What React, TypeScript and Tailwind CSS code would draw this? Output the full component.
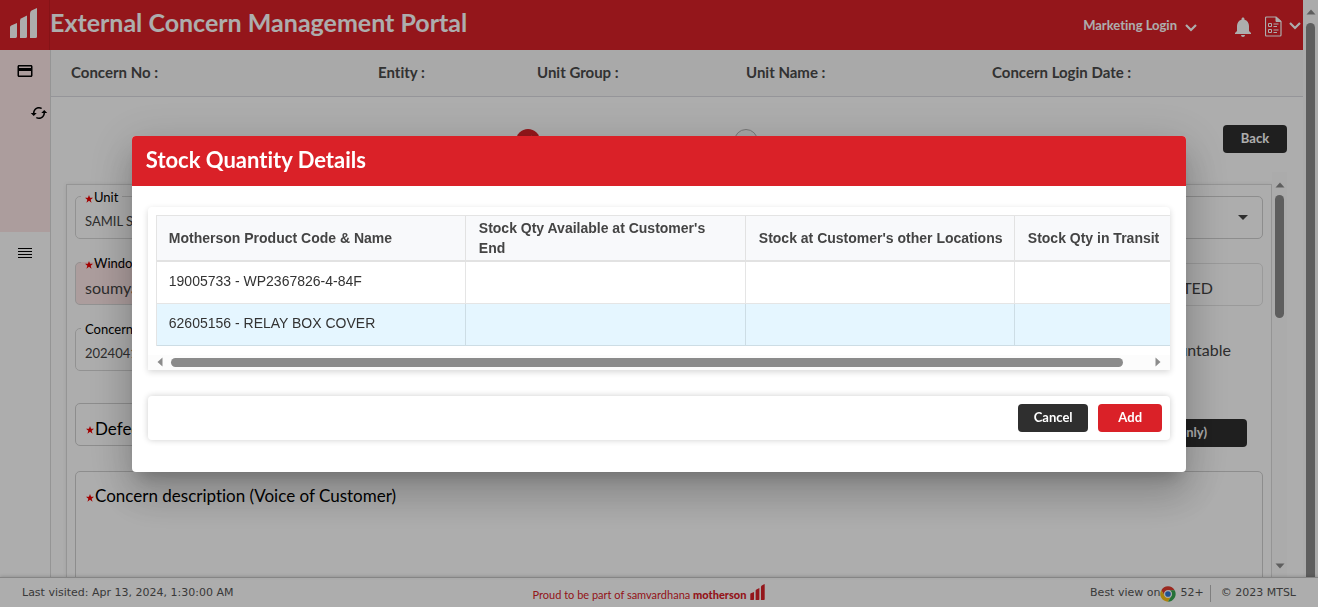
import type { ReactNode } from "react";
import { MdCached, MdCreditCard, MdNotifications, MdEdit } from "react-icons/md";

function BarsLogo({ className }: { className: string }) {
  return (
    <svg viewBox="0 0 27 30" className={className} fill="currentColor" aria-hidden="true">
      <path d="M0 19.2Q0 18 1.2 17.5L7 15v13.6Q7 30 5.600 30H0z" />
      <path d="M10 12.600Q10 11 11.500 10.200L17 7.500V28.500Q17 30 15.500 30H10z" />
      <path d="M20 5.500Q20 3.600 21.500 2.600L27 0V28.500Q27 30 25.500 30H20z" />
    </svg>
  );
}

function Chevron() {
  return (
    <svg viewBox="0 0 12 8" className="h-2 w-3" fill="none" stroke="currentColor" strokeWidth="2.2" aria-hidden="true">
      <path d="M1 1l5 5 5-5" />
    </svg>
  );
}

function ReportIcon() {
  return (
    <svg viewBox="0 0 17 21" className="h-[21px] w-[17px]" fill="none" stroke="currentColor" aria-hidden="true">
      <path d="M1.500 1h9.500l5 4.500V19a1 1 0 0 1-1 1H1.500a1 1 0 0 1-1-1V2a1 1 0 0 1 1-1z" strokeWidth="1.200" />
      <path d="M11 1v4.500h5z" fill="currentColor" />
      <path d="M3.500 7.500h3v3h-3zM3.500 13.500h3v3h-3zM8.500 8h5M8.500 10.500h3.500M8.500 14h5M8.500 16.500h3.500" />
    </svg>
  );
}

function ChromeLogo() {
  return (
    <svg viewBox="0 0 48 48" className="h-4 w-4" aria-hidden="true">
      <path d="M4 12.500A23 23 0 0 1 43.900 12.500H24A11.500 11.500 0 0 0 14 29.700z" fill="#e33b2e" />
      <path d="M4 12.500A23 23 0 0 0 24 47L34 29.700A11.500 11.500 0 0 1 14 29.700z" fill="#fbc116" />
      <path d="M43.900 12.500A23 23 0 0 1 24 47L34 29.700A11.500 11.500 0 0 0 34 18.300L30 12.500z" fill="#35a852" />
      <circle cx="24" cy="24" r="11.500" fill="#fff" />
      <circle cx="24" cy="24" r="8.500" fill="#2f78d8" />
    </svg>
  );
}

function Arrow({ dir }: { dir: "up" | "down" | "left" | "right" }) {
  const paths = {
    up: "M5 2.500L9.500 7.500h-9z",
    down: "M5 7.500L.5 2.500h9z",
    left: "M2.500 5L7.500.5v9z",
    right: "M7.500 5L2.500.5v9z",
  };
  return (
    <svg viewBox="0 0 10 10" className="h-2.5 w-2.5 shrink-0" fill="#8b8b8b" aria-hidden="true">
      <path d={paths[dir]} />
    </svg>
  );
}

function Star() {
  return (
    <svg viewBox="0 0 24 24" className="mr-px inline-block h-2 w-2" fill="#f00000" aria-hidden="true">
      <path d="M12 0l3.200 8.500H24l-7 5.500 2.600 9L12 17.600 4.400 23 7 14 0 8.500h8.800z" />
    </svg>
  );
}

const infoLabels = [
  { text: "Concern No :", width: "w-[307px]" },
  { text: "Entity :", width: "w-[159px]" },
  { text: "Unit Group :", width: "w-[209px]" },
  { text: "Unit Name :", width: "w-[246px]" },
  { text: "Concern Login Date :", width: "" },
];

function Field({
  id,
  label,
  value,
  required,
  box,
  text,
}: {
  id: string;
  label: string;
  value: string;
  required?: boolean;
  box: string;
  text: string;
}) {
  return (
    <fieldset className={`h-[54px] w-full min-w-0 rounded-[5px] border border-[#d8d8d8] px-[5px] ${box}`}>
      <legend className="h-[22px] px-1 pt-1 text-[13px] leading-4 text-black">
        <label htmlFor={id}>
          {required && <Star />}
          {label}
        </label>
      </legend>
      <input id={id} readOnly defaultValue={value} className={`block h-7 w-full bg-transparent px-1 text-[#444] outline-none ${text}`} />
    </fieldset>
  );
}

function DarkButton({ children, className }: { children: ReactNode; className: string }) {
  return (
    <button type="button" className={`h-7 rounded bg-[#2f2f2f] text-[13px] font-bold text-white ${className}`}>
      {children}
    </button>
  );
}

function FormArea() {
  return (
    <div className="mt-3 min-w-0 flex-1 overflow-hidden border border-b-0 border-[#dcdcdc] px-2 shadow-[0_0_4px_rgba(0,0,0,0.08)]">
      <div className="grid grid-cols-2 gap-x-6">
        <div className="flex flex-col gap-3">
          <Field id="unit" label="Unit" value="SAMIL S" required box="" text="text-[13px]" />
          <Field id="window" label="Window" value="soumya" required box="bg-[#fee7e7]" text="text-base" />
          <Field id="concern-date" label="Concern" value="20240413" box="" text="text-[13px]" />
        </div>
        <div className="flex flex-col pt-[11px]">
          <div className="flex h-[43px] items-center rounded-[5px] border border-[#d0d0d0] px-3.5">
            <select aria-label="Customer" className="h-full flex-1 appearance-none bg-transparent outline-none" />
            <svg viewBox="0 0 10 5" className="h-[5px] w-2.5" fill="#444" aria-hidden="true">
              <path d="M0 0h10L5 5z" />
            </svg>
          </div>
          <div className="mt-6 flex h-[43px] items-center rounded-[5px] border border-[#e4e4e4] pr-[49px] pt-1.5">
            <input readOnly aria-label="Status" defaultValue="TED" className="w-full bg-transparent text-right text-base text-[#444] outline-none" />
          </div>
          <p className="mt-8 pr-8 text-right text-base text-[#444]">Accountable</p>
        </div>
      </div>
      <div className="mt-8 flex items-start justify-between">
        <div className="flex h-[43px] w-2/5 items-center rounded-[5px] border border-[#d0d0d0] px-2.5 pt-2">
          <label htmlFor="defect" className="shrink-0 text-[17px] text-black">
            <Star />
            Defect
          </label>
          <input id="defect" className="min-w-0 flex-1 bg-transparent outline-none" />
        </div>
        <DarkButton className="mr-4 mt-4 w-48 pr-10 text-right">(View only)</DarkButton>
      </div>
      <div className="mt-6 h-40 rounded-[5px] border border-[#d0d0d0] px-2.5 pt-3">
        <label htmlFor="description" className="block text-[17px] leading-6 text-black">
          <Star />
          Concern description (Voice of Customer)
        </label>
        <textarea id="description" className="block h-24 w-full resize-none bg-transparent outline-none" />
      </div>
    </div>
  );
}

function Page() {
  return (
    <div className="flex h-screen flex-col overflow-hidden bg-white">
      <div className="flex min-h-0 flex-1">
        <div className="flex min-w-0 flex-1 flex-col">
          <header className="flex h-[50px] shrink-0 items-center bg-[#da2128] pr-0.5 text-white">
            <div className="flex h-full w-[50px] items-center border-r border-[#c61d23] pb-1 pl-2.5">
              <BarsLogo className="h-[30px] w-[27px]" />
            </div>
            <h1 className="flex-1 whitespace-nowrap pb-1 text-[25px] font-bold">External Concern Management Portal</h1>
            <button type="button" className="flex items-center gap-2 pt-0.5 text-[13px] font-bold">
              Marketing Login
              <span className="pt-1">
                <Chevron />
              </span>
            </button>
            <button type="button" aria-label="Notifications" className="ml-[34px] pt-1">
              <MdNotifications className="h-6 w-6" />
            </button>
            <button type="button" aria-label="Reports" className="ml-2.5 flex items-center gap-[7px] pt-0.5">
              <ReportIcon />
              <Chevron />
            </button>
          </header>
          <div className="flex min-h-0 flex-1">
            <nav className="w-[51px] shrink-0 border-r border-[#dcdcdc] text-black">
              <div className="flex h-[182px] flex-col bg-[#fee7e7] pt-3">
                <a href="#cards" aria-label="Cards" className="pl-4">
                  <MdCreditCard className="h-[18px] w-[18px]" />
                </a>
                <a href="#refresh" aria-label="Refresh" className="mt-6 self-end pr-0.5">
                  <MdCached className="h-[18px] w-[18px]" />
                </a>
              </div>
              <a href="#menu" aria-label="Menu" className="block pl-[18px] pt-4">
                <svg viewBox="0 0 14 11" className="h-[11px] w-3.5" stroke="currentColor" aria-hidden="true">
                  <path d="M0 .5h14M0 3.500h14M0 6.500h14M0 9.500h14" />
                </svg>
              </a>
            </nav>
            <main className="flex min-w-0 flex-1 flex-col">
              <div className="flex h-[47px] shrink-0 items-center border-b border-[#dcdce2] bg-[#f9f9f9] pb-0.5 pl-5 text-[15px] font-bold text-[#4a4a4a]">
                {infoLabels.map((item) => (
                  <span key={item.text} className={`whitespace-nowrap ${item.width}`}>
                    {item.text}
                  </span>
                ))}
              </div>
              <div className="flex h-[75px] shrink-0 items-start pr-4 pt-7">
                <div className="flex flex-1 justify-center gap-[194px] pt-1">
                  <span className="flex h-6 w-6 items-center justify-center rounded-full bg-[#da2128] text-white">
                    <MdEdit className="h-3.5 w-3.5" />
                  </span>
                  <span className="flex h-6 w-6 items-center justify-center rounded-full border border-[#b0b0b0] bg-[#f4f4f4] text-xs text-[#777]">
                    2
                  </span>
                </div>
                <DarkButton className="w-16">Back</DarkButton>
              </div>
              <div className="flex min-h-0 flex-1 pl-[15px] pr-4">
                <FormArea />
                <div className="flex w-[15px] flex-col items-center bg-[#fcfcfc] pb-1.5 pt-2" aria-hidden="true">
                  <Arrow dir="up" />
                  <div className="mt-[5px] h-[123px] w-[9px] rounded-full bg-[#8b8b8b]" />
                  <div className="flex-1" />
                  <Arrow dir="down" />
                </div>
              </div>
            </main>
          </div>
        </div>
        <div className="flex w-[15px] shrink-0 flex-col items-center bg-[#fcfcfc] pt-[7px]" aria-hidden="true">
          <Arrow dir="up" />
          <div className="mt-1.5 w-[9px] flex-1 rounded-t-full bg-[#8b8b8b]" />
        </div>
      </div>
      <footer className="grid h-[30px] shrink-0 grid-cols-[1fr_auto_1fr] items-center border-t border-[#c4c4c4] px-[22px] pt-0.5 font-['DejaVu_Sans',sans-serif] text-[11px] text-[#555] shadow-[0_-1px_3px_rgba(0,0,0,0.15)]">
        <span>Last visited: Apr 13, 2024, 1:30:00 AM</span>
        <span className="flex items-center gap-1 pr-5 font-['Lato',sans-serif] text-[#da2128]">
          <span className="pt-1">
            Proud to be part of samvardhana <b className="font-black">motherson</b>
          </span>
          <BarsLogo className="mb-1 h-4 w-[15px]" />
        </span>
        <span className="flex items-center justify-end">
          Best view on
          <ChromeLogo />
          <span className="ml-1 border-r border-[#bbb] pr-1.5">52+</span>
          <span className="ml-2.5">© 2023 MTSL</span>
        </span>
      </footer>
    </div>
  );
}

const columns = [
  "Motherson Product Code & Name",
  "Stock Qty Available at Customer's End",
  "Stock at Customer's other Locations",
  "Stock Qty in Transit",
];
const products = ["19005733 - WP2367826-4-84F", "62605156 - RELAY BOX COVER"];

function StockDialog() {
  return (
    <div className="fixed inset-0 flex items-center justify-center bg-black/32">
      <div
        role="dialog"
        aria-modal="true"
        aria-labelledby="stock-title"
        className="w-[80vw] overflow-hidden rounded bg-white shadow-[0_11px_15px_-7px_rgba(0,0,0,0.2),0_24px_38px_3px_rgba(0,0,0,0.14),0_9px_46px_8px_rgba(0,0,0,0.12)]"
      >
        <h2 id="stock-title" className="h-[50px] bg-[#da2128] px-3.5 text-[22px] font-bold leading-[48px] text-white">
          Stock Quantity Details
        </h2>
        <div className="px-4 pb-8 pt-[21px]">
          <div className="rounded-t bg-white pt-2 shadow-[0_2px_6px_rgba(0,0,0,0.16)]">
            <div className="overflow-hidden pl-2">
              <table className="w-full table-fixed border-separate border-spacing-0 border-l border-t border-[#e4e4e4] font-['Liberation_Sans',Arial,sans-serif] text-[14px] text-[#333]">
                <colgroup>
                  <col className="w-[309px]" />
                  <col className="w-[280px]" />
                  <col className="w-[269px]" />
                  <col />
                </colgroup>
                <thead>
                  <tr className="h-[46px] bg-[#f8f9fb]">
                    {columns.map((c) => (
                      <th key={c} className="border-b-2 border-r border-[#e2e2e2] py-0.5 pl-[13px] pr-2.5 text-left font-bold leading-5 text-[#444] first:pl-3 last:border-r-0">
                        {c}
                      </th>
                    ))}
                  </tr>
                </thead>
                <tbody>
                  {products.map((p) => (
                    <tr key={p} className="h-[42px] even:bg-[#e5f6ff]">
                      <td className="border-b border-r border-black/10 pb-0.5 pl-3">{p}</td>
                      <td className="border-b border-r border-black/10" />
                      <td className="border-b border-r border-black/10" />
                      <td className="border-b border-black/10" />
                    </tr>
                  ))}
                </tbody>
              </table>
            </div>
            <div className="mt-[9px] flex h-[15px] items-center bg-[#fcfcfc] px-[7px]" aria-hidden="true">
              <Arrow dir="left" />
              <div className="ml-1.5 mr-[30px] h-[9px] flex-1 rounded-full bg-[#8b8b8b]" />
              <Arrow dir="right" />
            </div>
          </div>
          <div className="mt-[26px] flex justify-end gap-2.5 rounded bg-white p-2 shadow-[0_0_6px_rgba(0,0,0,0.2)]">
            <DarkButton className="w-[70px]">Cancel</DarkButton>
            <button type="button" className="h-7 w-16 rounded bg-[#da2128] text-[13px] font-bold text-white">
              Add
            </button>
          </div>
        </div>
      </div>
    </div>
  );
}

export default function App() {
  return (
    <div className="font-['Lato',sans-serif] [font-variant-ligatures:none]">
      <Page />
      <StockDialog />
    </div>
  );
}
